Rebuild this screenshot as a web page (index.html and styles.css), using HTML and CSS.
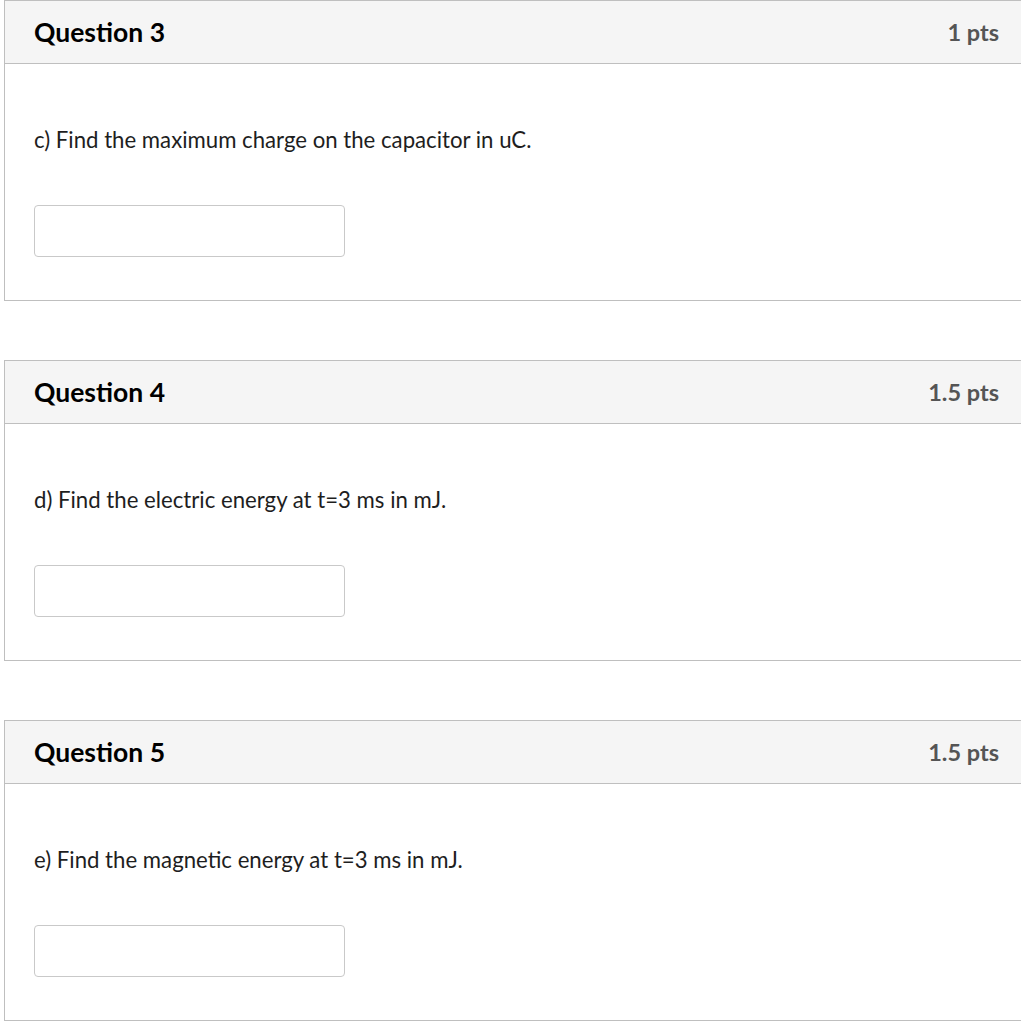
FILE: index.html
```html
<!DOCTYPE html>
<html>
<head>
<meta charset="utf-8">
<link rel="stylesheet" href="styles.css">
</head>
<body>
<div class="quiz">
  <div class="card">
    <div class="card-header">
      <span class="q-title">Question 3</span>
      <span class="q-pts">1 pts</span>
    </div>
    <div class="card-body">
      <p class="q-text">c) Find the maximum charge on the capacitor in uC.</p>
      <input class="answer" type="text">
    </div>
  </div>
  <div class="card">
    <div class="card-header">
      <span class="q-title">Question 4</span>
      <span class="q-pts">1.5 pts</span>
    </div>
    <div class="card-body">
      <p class="q-text">d) Find the electric energy at t=3 ms in mJ.</p>
      <input class="answer" type="text">
    </div>
  </div>
  <div class="card">
    <div class="card-header">
      <span class="q-title">Question 5</span>
      <span class="q-pts">1.5 pts</span>
    </div>
    <div class="card-body">
      <p class="q-text">e) Find the magnetic energy at t=3 ms in mJ.</p>
      <input class="answer" type="text">
    </div>
  </div>
</div>
</body>
</html>
```
FILE: styles.css
```css
html, body {
  margin: 0;
  padding: 0;
  background: #fff;
  overflow: hidden;
}
body {
  font-family: Lato, "Liberation Sans", sans-serif;
  color: #2d3b45;
}
.quiz {
  display: flex;
  flex-direction: column;
  gap: 59px;
  padding-left: 4px;
  width: 1040px;
}
.card {
  border: 1px solid #bfbfbf;
  height: 299px;
  display: flex;
  flex-direction: column;
}
.card-header {
  height: 63px;
  background: #f5f5f5;
  border-bottom: 1px solid #bfbfbf;
  display: flex;
  align-items: center;
  justify-content: space-between;
  padding: 0 44px 1px 29px;
  box-sizing: border-box;
}
.q-title {
  font-weight: 700;
  font-size: 26.5px;
  color: #000;
}
.q-pts {
  font-weight: 700;
  font-size: 23.5px;
  color: #555;
}
.card-body {
  padding: 0 0 0 29px;
  flex: 1;
}
.q-text {
  margin: 60px 0 0;
  font-size: 22.2px;
  line-height: 32px;
  color: #1e1e1e;
}
.answer {
  display: block;
  margin-top: 49px;
  width: 311px;
  height: 52px;
  box-sizing: border-box;
  border: 1px solid #c9c9c9;
  border-radius: 4px;
  background: #fff;
  outline: none;
}
```
